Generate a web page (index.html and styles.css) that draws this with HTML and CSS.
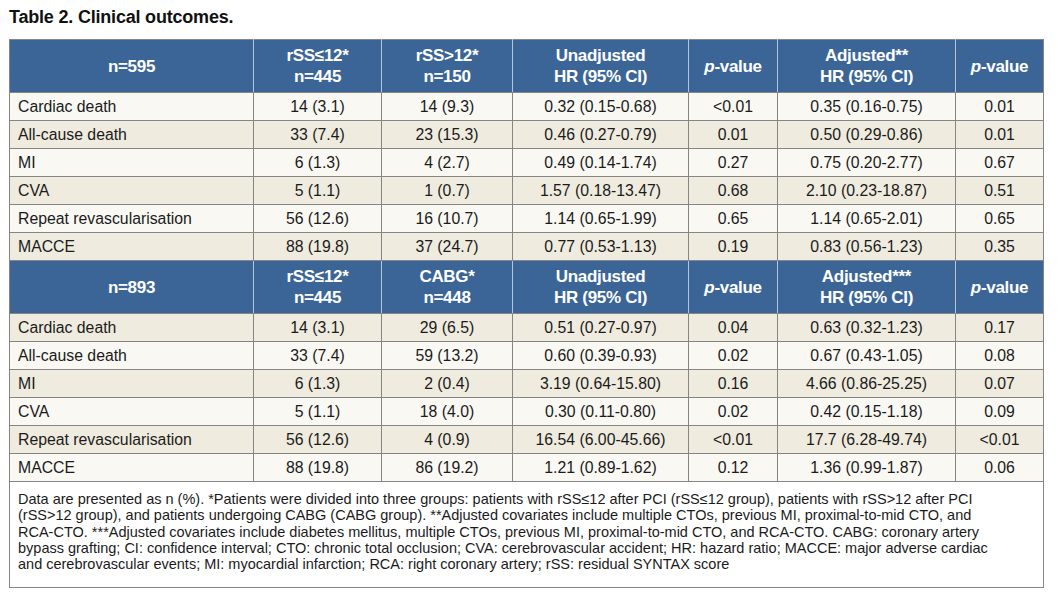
FILE: index.html
```html
<!DOCTYPE html>
<html lang="en">
<head>
<meta charset="utf-8">
<title>Table 2. Clinical outcomes.</title>
<link rel="stylesheet" href="styles.css">
</head>
<body>
<div class="page">
  <h1 class="title">Table 2. Clinical outcomes.</h1>
  <table class="outcomes">
    <colgroup>
      <col class="c-label"><col class="c-n1"><col class="c-n2"><col class="c-hr1"><col class="c-p1"><col class="c-hr2"><col class="c-p2">
    </colgroup>
    <tbody>
      <tr class="head">
        <th>n=595</th>
        <th>rSS≤12*<br>n=445</th>
        <th>rSS&gt;12*<br>n=150</th>
        <th>Unadjusted<br>HR (95% CI)</th>
        <th><i>p</i>-value</th>
        <th>Adjusted**<br>HR (95% CI)</th>
        <th><i>p</i>-value</th>
      </tr>
      <tr class="light"><td class="label">Cardiac death</td><td>14 (3.1)</td><td>14 (9.3)</td><td>0.32 (0.15-0.68)</td><td>&lt;0.01</td><td>0.35 (0.16-0.75)</td><td>0.01</td></tr>
      <tr class="beige"><td class="label">All-cause death</td><td>33 (7.4)</td><td>23 (15.3)</td><td>0.46 (0.27-0.79)</td><td>0.01</td><td>0.50 (0.29-0.86)</td><td>0.01</td></tr>
      <tr class="light"><td class="label">MI</td><td>6 (1.3)</td><td>4 (2.7)</td><td>0.49 (0.14-1.74)</td><td>0.27</td><td>0.75 (0.20-2.77)</td><td>0.67</td></tr>
      <tr class="beige"><td class="label">CVA</td><td>5 (1.1)</td><td>1 (0.7)</td><td>1.57 (0.18-13.47)</td><td>0.68</td><td>2.10 (0.23-18.87)</td><td>0.51</td></tr>
      <tr class="light"><td class="label">Repeat revascularisation</td><td>56 (12.6)</td><td>16 (10.7)</td><td>1.14 (0.65-1.99)</td><td>0.65</td><td>1.14 (0.65-2.01)</td><td>0.65</td></tr>
      <tr class="beige"><td class="label">MACCE</td><td>88 (19.8)</td><td>37 (24.7)</td><td>0.77 (0.53-1.13)</td><td>0.19</td><td>0.83 (0.56-1.23)</td><td>0.35</td></tr>
      <tr class="head">
        <th>n=893</th>
        <th>rSS≤12*<br>n=445</th>
        <th>CABG*<br>n=448</th>
        <th>Unadjusted<br>HR (95% CI)</th>
        <th><i>p</i>-value</th>
        <th>Adjusted***<br>HR (95% CI)</th>
        <th><i>p</i>-value</th>
      </tr>
      <tr class="beige"><td class="label">Cardiac death</td><td>14 (3.1)</td><td>29 (6.5)</td><td>0.51 (0.27-0.97)</td><td>0.04</td><td>0.63 (0.32-1.23)</td><td>0.17</td></tr>
      <tr class="light"><td class="label">All-cause death</td><td>33 (7.4)</td><td>59 (13.2)</td><td>0.60 (0.39-0.93)</td><td>0.02</td><td>0.67 (0.43-1.05)</td><td>0.08</td></tr>
      <tr class="beige"><td class="label">MI</td><td>6 (1.3)</td><td>2 (0.4)</td><td>3.19 (0.64-15.80)</td><td>0.16</td><td>4.66 (0.86-25.25)</td><td>0.07</td></tr>
      <tr class="light"><td class="label">CVA</td><td>5 (1.1)</td><td>18 (4.0)</td><td>0.30 (0.11-0.80)</td><td>0.02</td><td>0.42 (0.15-1.18)</td><td>0.09</td></tr>
      <tr class="beige"><td class="label">Repeat revascularisation</td><td>56 (12.6)</td><td>4 (0.9)</td><td>16.54 (6.00-45.66)</td><td>&lt;0.01</td><td>17.7 (6.28-49.74)</td><td>&lt;0.01</td></tr>
      <tr class="light"><td class="label">MACCE</td><td>88 (19.8)</td><td>86 (19.2)</td><td>1.21 (0.89-1.62)</td><td>0.12</td><td>1.36 (0.99-1.87)</td><td>0.06</td></tr>
      <tr class="note">
        <td colspan="7">Data are presented as n (%). *Patients were divided into three groups: patients with rSS≤12 after PCI (rSS≤12 group), patients with rSS&gt;12 after PCI<br>(rSS&gt;12 group), and patients undergoing CABG (CABG group). **Adjusted covariates include multiple CTOs, previous MI, proximal-to-mid CTO, and<br>RCA-CTO. ***Adjusted covariates include diabetes mellitus, multiple CTOs, previous MI, proximal-to-mid CTO, and RCA-CTO. CABG: coronary artery<br>bypass grafting; CI: confidence interval; CTO: chronic total occlusion; CVA: cerebrovascular accident; HR: hazard ratio; MACCE: major adverse cardiac<br>and cerebrovascular events; MI: myocardial infarction; RCA: right coronary artery; rSS: residual SYNTAX score</td>
      </tr>
    </tbody>
  </table>
</div>
</body>
</html>
```

FILE: styles.css
```css
html, body {
  margin: 0;
  padding: 0;
  background: #ffffff;
}

.page {
  padding: 6px 0 0 9px;
  width: 1034px;
}

.title {
  margin: 0 0 11px 0;
  font-family: "Liberation Sans Narrow", "Liberation Sans", sans-serif;
  font-weight: bold;
  font-size: 18px;
  letter-spacing: -0.2px;
  line-height: 22px;
  color: #111111;
}

.outcomes {
  width: 1034px;
  table-layout: fixed;
  border-collapse: collapse;
  border: 1px solid #858585;
  font-family: "Liberation Sans", Arial, sans-serif;
}

.c-label { width: 244px; }
.c-n1 { width: 128px; }
.c-n2 { width: 131px; }
.c-hr1 { width: 176px; }
.c-p1 { width: 89px; }
.c-hr2 { width: 178px; }
.c-p2 { width: 88px; }

.head th {
  height: 52px;
  padding: 0 4px;
  background: #3b6597;
  color: #ffffff;
  font-family: "Liberation Sans Narrow", "Liberation Sans", sans-serif;
  font-weight: bold;
  font-size: 17px;
  letter-spacing: -0.3px;
  line-height: 21px;
  text-align: center;
  vertical-align: middle;
  border-left: 1px solid #b4c6dc;
  border-right: 1px solid #b4c6dc;
  border-top: 1px solid #858585;
  border-bottom: 1px solid #858585;
}

.head th:first-child { border-left-color: #858585; }
.head th:last-child { border-right-color: #858585; }

.head i {
  font-style: italic;
}

td {
  height: 27px;
  padding: 0 6px;
  border: 1px solid #858585;
  font-size: 15.8px;
  line-height: 18px;
  color: #1b1b1b;
  text-align: center;
  vertical-align: middle;
  white-space: nowrap;
}

td.label {
  text-align: left;
  padding-left: 8px;
}

.light td { background: #f9f8f3; }
.beige td { background: #efebdf; }

.note td {
  height: auto;
  padding: 9px 8px 15px 8px;
  background: #ffffff;
  font-size: 14.5px;
  line-height: 16.3px;
  text-align: left;
  white-space: nowrap;
}
```
